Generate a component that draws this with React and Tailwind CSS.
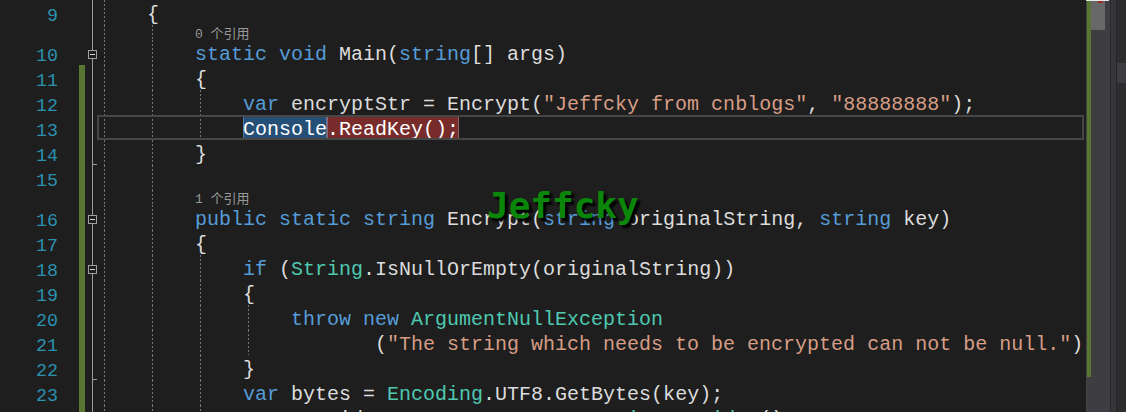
const mono = "font-['Liberation_Mono','Noto_Sans_CJK_SC',monospace]";

const tone = {
  kw: "text-[#569cd6]",
  ty: "text-[#4ec9b0]",
  st: "text-[#d69d85]",
  tx: "text-[#dcdcdc]",
};

const guideLeft = ["left-[7px]", "left-[55px]", "left-[103px]", "left-[151px]"];

const rows = [
  { n: 9, guides: [0], code: [["    {"]] },
  { lens: "0 个引用", guides: [0, 1] },
  {
    n: 10,
    guides: [0, 1],
    fold: "box",
    code: [["        "], ["static void", "kw"], [" Main("], ["string", "kw"], ["[] args)"]],
  },
  { n: 11, change: true, guides: [0, 1], code: [["        {"]] },
  {
    n: 12,
    change: true,
    guides: [0, 1, 2],
    code: [
      ["            "],
      ["var", "kw"],
      [" encryptStr = Encrypt("],
      ['"Jeffcky from cnblogs"', "st"],
      [", "],
      ['"88888888"', "st"],
      [");"],
    ],
  },
  {
    n: 13,
    change: true,
    current: true,
    guides: [0, 1, 2],
    code: [["            "], ["Console", "tx", "blue"], [".ReadKey();", "tx", "red"]],
  },
  { n: 14, change: true, guides: [0, 1], fold: "end", code: [["        }"]] },
  { n: 15, change: true, guides: [0, 1], code: [] },
  { lens: "1 个引用", change: true, guides: [0, 1] },
  {
    n: 16,
    change: true,
    guides: [0, 1],
    fold: "box",
    code: [
      ["        "],
      ["public static string", "kw"],
      [" Encrypt("],
      ["string", "kw"],
      [" originalString, "],
      ["string", "kw"],
      [" key)"],
    ],
  },
  { n: 17, change: true, guides: [0, 1], code: [["        {"]] },
  {
    n: 18,
    change: true,
    guides: [0, 1, 2],
    fold: "box",
    code: [["            "], ["if", "kw"], [" ("], ["String", "ty"], [".IsNullOrEmpty(originalString))"]],
  },
  { n: 19, change: true, guides: [0, 1, 2], code: [["            {"]] },
  {
    n: 20,
    change: true,
    guides: [0, 1, 2, 3],
    code: [["                "], ["throw new", "kw"], [" "], ["ArgumentNullException", "ty"]],
  },
  {
    n: 21,
    change: true,
    guides: [0, 1, 2, 3],
    code: [
      ["                       ("],
      ['"The string which needs to be encrypted can not be null."', "st"],
      [");"],
    ],
  },
  { n: 22, change: true, guides: [0, 1, 2], fold: "end", code: [["            }"]] },
  {
    n: 23,
    change: true,
    guides: [0, 1, 2],
    code: [["            "], ["var", "kw"], [" bytes = "], ["Encoding", "ty"], [".UTF8.GetBytes(key);"]],
  },
  {
    n: 24,
    change: true,
    guides: [0, 1, 2],
    code: [
      ["            "],
      ["var", "kw"],
      [" provider = "],
      ["new", "kw"],
      [" "],
      ["DESCryptoServiceProvider", "ty"],
      ["();"],
    ],
  },
];

function Guides({ levels }) {
  return levels.map((l) => (
    <div
      key={l}
      className={`absolute top-0 bottom-0 w-px bg-[repeating-linear-gradient(to_bottom,#747474_0px,#747474_2px,transparent_2px,transparent_4px)] ${guideLeft[l]}`}
    />
  ));
}

function FoldCell({ fold }) {
  return (
    <div className="relative w-[12px] shrink-0">
      <div className="absolute left-[7px] top-0 bottom-0 w-px bg-[#9a9a9a]" />
      {fold === "box" && (
        <div className="absolute left-[3px] top-[10px] flex h-[9px] w-[9px] items-center justify-center border border-[#a0a0a0] bg-[#1e1e1e]">
          <div className="h-px w-[5px] bg-[#d4d4d4]" />
        </div>
      )}
      {fold === "end" && <div className="absolute left-[7px] bottom-0 h-px w-[5px] bg-[#9a9a9a]" />}
    </div>
  );
}

function Token({ t, k = "tx", box }) {
  if (box === "blue") {
    return (
      <span className="h-[25px] whitespace-pre bg-[#264f78] leading-[30px] text-white ring-1 ring-inset ring-[#56779f]">
        {t}
      </span>
    );
  }
  if (box === "red") {
    return (
      <span className="h-[25px] whitespace-pre bg-[#782b2b] leading-[30px] text-white ring-1 ring-inset ring-[#8c6565]">
        {t}
      </span>
    );
  }
  return <span className={`whitespace-pre leading-[30px] ${tone[k]}`}>{t}</span>;
}

function Row({ row }) {
  const lens = !!row.lens;
  return (
    <div className={`flex shrink-0 ${lens ? "h-[15px]" : "h-[25px]"}`}>
      <div className="w-[58px] shrink-0 text-right text-[18.3px] leading-[32px] text-[#2b91af]">
        {row.n}
      </div>
      <div className="w-[21px] shrink-0" />
      <div className={`w-[6px] shrink-0 ${row.change ? "bg-[#587532]" : ""}`} />
      <FoldCell fold={row.fold} />
      <div className="relative flex flex-1 items-start pl-[2px]">
        <Guides levels={row.guides} />
        {row.current && (
          <div className="absolute inset-y-0 left-0 right-[2px] border-2 border-[#464646]" />
        )}
        {lens ? (
          <span className="pl-[96px] text-[13px] leading-[20px] text-[#999999]">{row.lens}</span>
        ) : (
          row.code.map(([t, k, box], i) => <Token key={i} t={t} k={k} box={box} />)
        )}
      </div>
    </div>
  );
}

function Scrollbar() {
  return (
    <div className="relative flex h-full w-[40px] shrink-0">
      <div className="w-px bg-[#434346]" />
      <div className="flex w-[4px] flex-col bg-[#3e3e42]">
        <div className="h-[377px] bg-[#587532]" />
      </div>
      <div className="relative w-[19px] bg-[#3e3e42]">
        <div className="h-[30px] w-[14px] bg-[#686868]" />
        <div className="absolute left-[7px] top-0 h-[3px] w-[5px] bg-[#9b2a2a]" />
      </div>
      <div className="w-[6px] border-l border-[#2a2a2c] bg-[#37373b]" />
      <div className="w-[10px] border-l border-[#252526] bg-[#2d2d30] pt-[63px]">
        <div className="h-[20px] bg-[#3e3e42]" />
      </div>
      <div className="absolute left-0 top-0 h-px w-[23px] bg-[#e6e6e6]" />
    </div>
  );
}

export default function App() {
  return (
    <div className={`flex h-[412px] w-[1126px] overflow-hidden bg-[#1e1e1e] text-[20px] ${mono}`}>
      <div className="relative flex w-[1086px] shrink-0 flex-col overflow-hidden">
        {rows.map((row, i) => (
          <Row key={i} row={row} />
        ))}
        <div className="absolute left-[487px] top-[188px] font-['DejaVu_Sans_Mono',monospace] text-[36px] font-bold leading-none text-[#0a870a] [text-shadow:3px_3px_2px_#000]">
          Jeffcky
        </div>
      </div>
      <Scrollbar />
    </div>
  );
}
